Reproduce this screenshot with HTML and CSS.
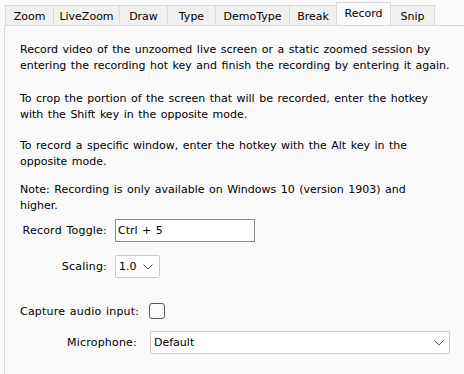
FILE: index.html
```html
<!DOCTYPE html>
<html>
<head>
<meta charset="utf-8">
<link rel="stylesheet" href="styles.css">
</head>
<body>
<div class="tabs">
  <div class="tab w-zoom">Zoom</div>
  <div class="tab w-live">LiveZoom</div>
  <div class="tab w-draw">Draw</div>
  <div class="tab w-type">Type</div>
  <div class="tab w-demo">DemoType</div>
  <div class="tab w-break">Break</div>
  <div class="tab w-record active">Record</div>
  <div class="tab w-snip last">Snip</div>
</div>
<div class="panel">
  <p class="p1">Record video of the unzoomed live screen or a static zoomed session by entering the recording hot key and finish the recording by entering it again.</p>
  <p class="p2">To crop the portion of the screen that will be recorded, enter the hotkey with the Shift key in the opposite mode.</p>
  <p class="p3">To record a specific window, enter the hotkey with the Alt key in the opposite mode.</p>
  <p class="p4">Note: Recording is only available on Windows 10 (version 1903) and higher.</p>
  <div class="form1">
    <div class="row r-toggle">
      <span class="label">Record Toggle:</span>
      <div class="textbox">Ctrl + 5</div>
    </div>
    <div class="row r-scale">
      <span class="label">Scaling:</span>
      <div class="combo small"><span>1.0</span><svg class="chev" width="10" height="6" viewBox="0 0 10 6"><polyline points="0.5,0.5 5,5 9.5,0.5" fill="none" stroke="#606060" stroke-width="1"/></svg></div>
    </div>
  </div>
  <div class="form2">
    <div class="row r-audio">
      <span class="label">Capture audio input:</span>
      <span class="check"></span>
    </div>
    <div class="row r-mic">
      <span class="label">Microphone:</span>
      <div class="combo wide"><span>Default</span><svg class="chev" width="10" height="6" viewBox="0 0 10 6"><polyline points="0.5,0.5 5,5 9.5,0.5" fill="none" stroke="#606060" stroke-width="1"/></svg></div>
    </div>
  </div>
</div>
</body>
</html>
```
FILE: styles.css
```css
html, body {
  margin: 0;
  padding: 0;
  background: #f9f9f9;
  font-family: "DejaVu Sans", Verdana, sans-serif;
  font-size: 11px;
  color: #000;
  width: 464px;
  height: 374px;
  overflow: hidden;
}
.tabs {
  display: flex;
  align-items: flex-end;
  height: 25px;
  padding-left: 5px;
  box-sizing: border-box;
}
.tab {
  box-sizing: border-box;
  height: 20px;
  background: #f0f0f0;
  border-left: 1px solid #dadada;
  border-top: 1px solid #dadada;
  text-align: center;
  line-height: 19px;
  padding-top: 1px;
}
.tab.last { border-right: 1px solid #dadada; }
.tab.active {
  height: 23px;
  background: #f9f9f9;
  padding-top: 0;
  line-height: 22px;
  border-right: 1px solid #dadada;
  margin-right: -1px;
  position: relative;
  z-index: 1;
}
.w-zoom { width: 48px; }
.w-live { width: 66px; }
.w-draw { width: 48px; }
.w-type { width: 48px; }
.w-demo { width: 74px; }
.w-break { width: 47px; }
.w-record { width: 55px; }
.w-snip { width: 45px; }
.panel {
  margin-left: 4px;
  border-top: 1px solid #dadada;
  border-left: 1px solid #dadada;
  height: 349px;
  padding: 16px 0 0 15px;
  box-sizing: border-box;
}
.panel p {
  margin: 0;
  line-height: 16px;
  width: 420px;
  word-spacing: 1px;
}
.panel p.p1 { width: 440px; }
.p2 { margin-top: 17px !important; }
.p3 { margin-top: 15px !important; }
.p4 { margin-top: 12px !important; }
.row {
  display: flex;
  align-items: center;
  word-spacing: 1px;
}
.label {
  text-align: right;
  box-sizing: border-box;
  letter-spacing: 0.2px;
  white-space: nowrap;
  flex: none;
}
.form1 { margin-top: 5px; }
.form1 .label { width: 95px; padding-right: 8px; }
.r-scale { margin-top: 13px; }
.textbox {
  box-sizing: border-box;
  width: 140px;
  height: 23px;
  border: 1px solid #8a8a8a;
  background: #fff;
  line-height: 21px;
  padding-left: 2px;
}
.combo {
  box-sizing: border-box;
  height: 23px;
  border: 1px solid #cccccc;
  background: #fff;
  display: flex;
  align-items: center;
  justify-content: space-between;
  padding: 0 6px 0 3px;
}
.combo.small { width: 45px; border-radius: 2px; }
.combo.wide { width: 300px; border-radius: 2px; padding-right: 5px; }
.chev { display: block; }
.form2 { margin-top: 25px; }
.form2 .label { width: 130px; padding-right: 13px; }
.r-audio { height: 16px; }
.check {
  box-sizing: border-box;
  width: 16px;
  height: 16px;
  border: 1px solid #5a5a5a;
  border-radius: 3px;
  background: #fbfbfb;
  margin-left: -1px;
}
.r-mic { margin-top: 12px; }
```
